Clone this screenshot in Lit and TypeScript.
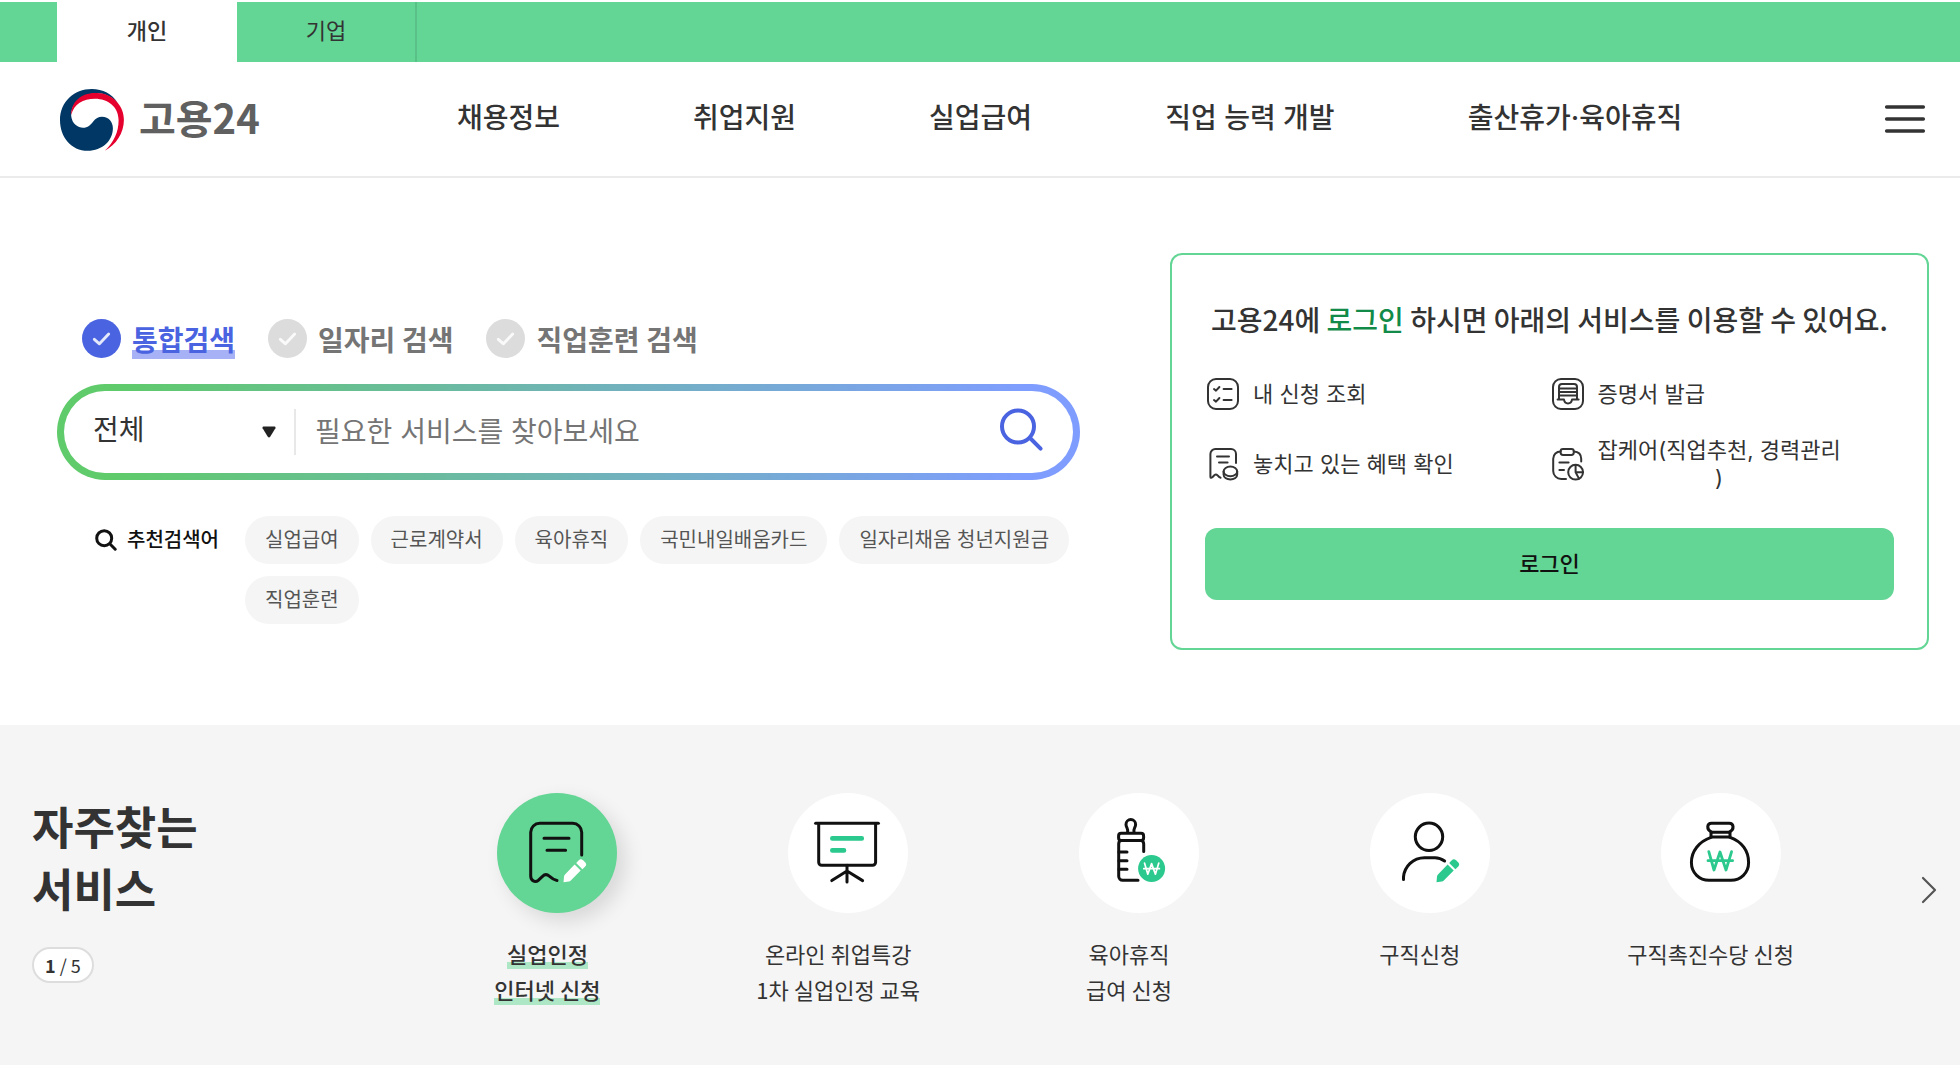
import { LitElement, html, css, svg } from "lit";
import { customElement, state } from "lit/decorators.js";
import { classMap } from "lit/directives/class-map.js";

const pencil = (fill: string) => svg`
  <g fill=${fill}>
    <path d="M66.5 89.2 L67 83.6 Q67.1 82.4 68 81.5 L77.6 71.6 L83.7 77.6 L73.8 87.4 Q73 88.3 71.8 88.5 Z" />
    <path d="M79.2 70 L81.6 67.4 Q83.8 65.2 86 67.2 L88.1 69.2 Q90.2 71.4 88.2 73.6 L85.4 76.2 Z" />
  </g>`;

const serviceIcons = {
  claim: svg`
    <g class="line">
      <path d="M84.7 62 V39.3 A9 9 0 0 0 75.7 30.3 H42.7 A9 9 0 0 0 33.7 39.3 V83 C33.7 88 38 89.8 41.5 87.2 L45.5 83.4 Q48.8 80 52.3 83.2 Q56.5 87 60 87.6" />
      <path d="M47 45.3 H72 M50 57.3 H68.6" />
    </g>
    ${pencil("#fff")}`,
  lecture: svg`
    <g class="line">
      <path d="M27.6 30.3 H90.4" />
      <path d="M30.7 31 V69.3 A3 3 0 0 0 33.7 72.3 H84.6 A3 3 0 0 0 87.6 69.3 V31" />
      <path d="M59 72.3 V89 M59 78 L43.8 87.6 M59 78 L74.6 87.6" />
    </g>
    <path d="M44.3 45.4 H73.8 M44.3 57.4 H56" fill="none" stroke="#2bc98d" stroke-width="4.6" stroke-linecap="round" />`,
  bottle: svg`
    <g class="line">
      <path d="M48.6 39 C49.4 35.6 47 34.4 47 31.4 A4.8 4.8 0 0 1 56.6 31.4 C56.6 34.4 54.2 35.6 55 39" />
      <rect x="39.6" y="40.3" width="25" height="7.2" rx="2.6" />
      <path d="M64.7 58.6 V51 Q64.6 48 62 47.6 M42.2 47.6 Q39.7 48 39.7 51 V83.3 A4 4 0 0 0 43.7 87.3 H59" />
      <path d="M40 59 H48 M40 67.7 H48 M40 76.3 H48" />
    </g>
    <circle cx="72.6" cy="75.5" r="13.5" fill="#2bc98d" />
    <path d="M65.5 70 L68.8 81.2 L72.6 70.6 L76.4 81.2 L79.8 70 M64.8 75.7 H80.4" fill="none" stroke="#fff" stroke-width="1.7" stroke-linecap="round" stroke-linejoin="round" />`,
  person: svg`
    <g class="line">
      <circle cx="59" cy="43.8" r="13.7" />
      <path d="M33.5 86.5 V84 C34.5 73.5 43 64.7 54.5 64.7 H65 C68.6 64.7 71.6 65.8 74.6 68" />
    </g>
    ${pencil("#2bc98d")}`,
  bag: svg`
    <g class="line">
      <path d="M50.5 39 C45 36.4 46 30.3 50.5 30.3 H68.2 C72.8 30.3 73.8 36.4 68.4 39" />
      <path d="M50 39.3 H69 M50 39.3 V44 H69 V39.3" />
      <path d="M50 44.4 C38 48.6 30.4 58 30.4 69.5 C30.4 80 38.5 87.3 48 87.3 H70 C79.6 87.3 87.6 80 87.6 69.5 C87.6 58 81 48.6 69 44.4" />
    </g>
    <path d="M47.8 58.6 L53 77 L59 59 L65 77 L70.6 58.6 M47 67.7 H71.6" fill="none" stroke="#2bc98d" stroke-width="2.8" stroke-linecap="round" stroke-linejoin="round" />`,
};

const benefitIcons = {
  checklist: svg`
    <rect x="1" y="1" width="30" height="30" rx="8" />
    <path d="M7 11 L9 12.6 L12.4 9 M16.6 11 H24.6 M7 22 L9 23.6 L12.4 20 M16.6 22 H24.6" />`,
  certificate: svg`
    <rect x="1" y="1" width="30" height="30" rx="8" />
    <path d="M7 21 V9 A3 3 0 0 1 10 6 H22 A3 3 0 0 1 25 9 V21 M7.5 10.4 H24.5 M7.5 14 H24.5 M7.5 17.4 H24.5" />
    <path d="M5.6 21.6 H12 Q12.6 25.4 16 25.4 Q19.4 25.4 20 21.6 H26.6" />`,
  receipt: svg`
    <path d="M29 15 V6 A5 5 0 0 0 24 1 H8.4 A5 5 0 0 0 3.4 6 V28.4 Q3.4 31 5.6 29 L7.6 27 Q9 25.8 10.6 27.4 Q12 29.4 13.6 29.8" />
    <path d="M10 8.6 H22 M12 14.4 H20.6" />
    <ellipse cx="23.4" cy="23.4" rx="6.8" ry="4.8" />
    <path d="M16.6 23.4 V26.6 C16.6 33 30.2 33 30.2 26.6 V23.4" />`,
  career: svg`
    <path d="M8.6 3.4 A7.4 7.4 0 0 0 1.2 10.8 V23 A8 8 0 0 0 9.2 31 H14 M21.8 3.4 Q29.2 3.8 29.2 10.8 V13.4" />
    <rect x="8.6" y="1" width="13.2" height="6" rx="2.4" />
    <path d="M7.4 14.4 H16.6 M7.4 22 H12" />
    <circle cx="23.6" cy="24.2" r="7.4" />
    <path d="M23.6 17 V24.2 H31 M23.6 24.2 L27 30.6" />`,
};

const services = [
  { icon: serviceIcons.claim, lines: ["실업인정", "인터넷 신청"] },
  { icon: serviceIcons.lecture, lines: ["온라인 취업특강", "1차 실업인정 교육"] },
  { icon: serviceIcons.bottle, lines: ["육아휴직", "급여 신청"] },
  { icon: serviceIcons.person, lines: ["구직신청"] },
  { icon: serviceIcons.bag, lines: ["구직촉진수당 신청"] },
];

const benefits = [
  { icon: benefitIcons.checklist, lines: ["내 신청 조회"] },
  { icon: benefitIcons.certificate, lines: ["증명서 발급"] },
  { icon: benefitIcons.receipt, lines: ["놓치고 있는 혜택 확인"] },
  { icon: benefitIcons.career, lines: ["잡케어(직업추천, 경력관리", ")"] },
];

const menu = ["채용정보", "취업지원", "실업급여", "직업 능력 개발", "출산휴가·육아휴직"];
const scopes = ["통합검색", "일자리 검색", "직업훈련 검색"];
const keywords = ["실업급여", "근로계약서", "육아휴직", "국민내일배움카드", "일자리채움 청년지원금", "직업훈련"];

@customElement("app-root")
export class AppRoot extends LitElement {
  @state() private scope = 0;
  @state() private activeService = 0;

  static styles = css`
    :host {
      display: block;
      min-height: 100vh;
      background: #fff;
      color: #333;
      font-family: "Noto Sans CJK KR", "Noto Sans", sans-serif;
      font-size: 22px;
    }
    .audience, .menu, .search, .benefits, .login {
      font-family: "Inter", "Noto Sans CJK KR", sans-serif;
    }
    * { box-sizing: border-box; }
    a { color: inherit; text-decoration: none; }
    button, input, select {
      font: inherit;
      color: inherit;
      border: 0;
      margin: 0;
      padding: 0;
      background: none;
    }
    button { cursor: pointer; }
    svg { display: block; flex: none; }
    ul { list-style: none; margin: 0; padding: 0; }
    h1, h2, p { margin: 0; }

    .audience {
      display: flex;
      height: 62px;
      padding-left: 57px;
      border-top: 2px solid #fff;
      background: #63d594;
    }
    .audience button { width: 180px; padding-bottom: 2px; line-height: 32px; }
    .audience .current { background: #fff; font-weight: 500; }
    .audience .other { border-right: 2px solid #59c187; }

    .header {
      display: flex;
      align-items: center;
      height: 116px;
      padding: 0 34px 0 60px;
      border-bottom: 2px solid #ebebeb;
    }
    .brand {
      display: flex;
      align-items: center;
      gap: 14px;
      width: 397px;
      padding-top: 2px;
      font-size: 40px;
      line-height: 54px;
      font-weight: 700;
      color: #606060;
    }
    .brand span { padding-bottom: 6px; }
    .menu {
      display: flex;
      gap: 133px;
      padding-bottom: 2px;
      font-size: 28px;
      line-height: 40px;
      font-weight: 500;
      white-space: nowrap;
    }
    .hamburger { margin-left: auto; }

    .hero {
      display: grid;
      grid-template-columns: 1023fr 759fr;
      column-gap: 90px;
      padding: 75px 31px 75px 57px;
    }
    .search { padding-top: 60px; }
    .scopes {
      display: flex;
      gap: 33px;
      margin: 0 0 21px;
      padding: 0 0 0 25px;
      border: 0;
      font-size: 28px;
      line-height: 44px;
      font-weight: 700;
      color: #757575;
    }
    .scope { display: flex; align-items: center; gap: 11px; cursor: pointer; }
    .scope input { appearance: none; width: 0; height: 0; position: absolute; }
    .scope .disc { fill: #dcdcdc; }
    .scope.on { color: #4a63e0; }
    .scope.on .disc { fill: #4a63e0; }
    .scope .name { padding-top: 6px; }
    .scope.on .name { background: linear-gradient(#a6b1f6, #a6b1f6) 0 37px / 100% 9px no-repeat; }

    .bar {
      display: flex;
      align-items: center;
      height: 96px;
      padding: 0 29px;
      border: 7px solid transparent;
      border-radius: 48px;
      background: linear-gradient(#fff, #fff) padding-box,
        linear-gradient(90deg, #5fcb6a 5%, #7f9dff 95%) border-box;
      font-size: 28px;
      line-height: 40px;
    }
    .kind {
      position: relative;
      display: flex;
      align-items: center;
      width: 203px;
      height: 46px;
      border-right: 2px solid #e8e8e8;
    }
    .kind select { appearance: none; width: 100%; padding-bottom: 4px; outline: 0; }
    .kind svg { position: absolute; right: 18px; pointer-events: none; }
    .bar input { flex: 1; min-width: 0; padding-left: 19px; outline: 0; }
    .bar input::placeholder { color: #757575; opacity: 1; }
    .bar button { padding-bottom: 2px; }

    .suggest {
      display: flex;
      gap: 26px;
      padding: 36px 0 0 38px;
      font-size: 20px;
      line-height: 48px;
    }
    .suggest h2 {
      display: flex;
      align-items: center;
      gap: 10px;
      height: 48px;
      flex: none;
      font-size: 20px;
      font-weight: 500;
      color: #111;
    }
    .chips { display: flex; flex-wrap: wrap; gap: 12px; }
    .chips a {
      display: block;
      padding: 0 20px;
      border-radius: 24px;
      background: #f5f5f5;
      color: #555;
      line-height: 48px;
    }

    .card {
      display: flex;
      flex-direction: column;
      padding: 45px 33px 48px;
      border: 2px solid #63d594;
      border-radius: 12px;
    }
    .card h2 {
      font-size: 28px;
      line-height: 38px;
      font-weight: 500;
      text-align: center;
      white-space: nowrap;
    }
    .card strong { font-weight: 500; color: #128a48; }
    .benefits {
      display: grid;
      grid-template-columns: 1fr 1fr;
      grid-template-rows: 64px 76px;
      align-items: center;
      padding: 24px 0 26px;
      line-height: 28px;
    }
    .benefits a { display: flex; align-items: center; gap: 14px; padding-left: 2px; text-align: center; }
    .benefits svg {
      fill: none;
      stroke: #333;
      stroke-width: 2;
      stroke-linecap: round;
      stroke-linejoin: round;
      overflow: visible;
    }
    .login {
      display: block;
      border-radius: 12px;
      background: #63d594;
      color: #111;
      font-weight: 500;
      line-height: 72px;
      text-align: center;
    }

    .services {
      display: flex;
      min-height: 340px;
      padding: 68px 14px 0 32px;
      background: #f5f5f5;
    }
    .intro { width: 370px; padding-top: 2px; }
    .intro h1 { font-size: 45px; line-height: 62px; font-weight: 700; }
    .pager {
      display: inline-block;
      margin-top: 28px;
      padding: 0 11px;
      border: 2px solid #ddd;
      border-radius: 18px;
      background: #fff;
      font-size: 18px;
      line-height: 32px;
      vertical-align: top;
    }
    .list { flex: 1; display: grid; grid-template-columns: repeat(5, 1fr); }
    .service {
      display: flex;
      flex-direction: column;
      align-items: center;
      gap: 22px;
      line-height: 36px;
      text-align: center;
      white-space: nowrap;
    }
    .round { padding-left: 20px; }
    .round svg { border-radius: 50%; background: #fff; }
    .line {
      fill: none;
      stroke: #111;
      stroke-width: 3;
      stroke-linecap: round;
      stroke-linejoin: round;
    }
    .service.on { font-weight: 500; }
    .service.on .round svg { background: #63d594; box-shadow: 8px 8px 20px rgba(0, 0, 0, 0.12); }
    .service.on .text {
      display: inline-block;
      background: linear-gradient(#aee7c5, #aee7c5) 0 100% / 100% 7px no-repeat;
      line-height: 32px;
    }
    .next { width: 90px; height: 194px; display: flex; align-items: center; justify-content: flex-end; padding-right: 8px; }
  `;

  render() {
    return html`
      <nav class="audience" aria-label="이용자 구분">
        <button class="current" aria-current="page">개인</button>
        <button class="other">기업</button>
      </nav>
      <header class="header">
        <a class="brand" href="#">
          <svg width="65" height="62" viewBox="0 0 65 62" aria-hidden="true">
            <path fill="#003764" d="M0 31 C0 13 14 0 31.7 0 C43 0 52 5 57.5 13.5 C50 6 42 3.5 35 4.3 C20 6 11 15 11.2 27 C12 35 18 38.7 23 38.7 C28 38.7 30.5 36 33 32.7 C35.5 29.5 38.5 27.7 42 27.7 C49 27.7 52.9 33 52.9 39.3 C52.9 52 42 61.8 27.8 61.8 C11 61.8 0 48 0 31Z" />
            <path fill="#e6002d" d="M11.2 26 C11 13 21 4 35 4 C43 3.4 51 6 57 13 C61.5 18 63.9 24 63.9 31 C63.9 44 56 56 44.8 61.8 C54 53 58.6 43 58.6 31 C58.6 18 48 9.7 35 9.7 C23 9.7 14 15 11.2 26Z" />
          </svg>
          <span>고용24</span>
        </a>
        <nav class="menu" aria-label="주 메뉴">
          ${menu.map((m) => html`<a href="#">${m}</a>`)}
        </nav>
        <button class="hamburger" aria-label="전체 메뉴">
          <svg width="42" height="30" viewBox="0 0 42 30">
            <path d="M2.6 3 H39.4 M2.6 15 H39.4 M2.6 27 H39.4" stroke="#333" stroke-width="3.4" stroke-linecap="round" />
          </svg>
        </button>
      </header>
      <main>
        <section class="hero">
          <form class="search" @submit=${(e: Event) => e.preventDefault()}>
            <fieldset class="scopes" aria-label="검색 구분">
              ${scopes.map(
                (s, i) => html`
                  <label class=${classMap({ scope: true, on: i === this.scope })}>
                    <input type="radio" name="scope" .checked=${i === this.scope} @change=${() => (this.scope = i)} />
                    <svg width="39" height="39" viewBox="0 0 38 38" aria-hidden="true">
                      <circle class="disc" cx="19" cy="19" r="19" />
                      <path d="M12 19.8 L17 24.2 L26 14.6" fill="none" stroke="#fff" stroke-opacity=".85" stroke-width="2.8" stroke-linecap="round" stroke-linejoin="round" />
                    </svg>
                    <span class="name">${s}</span>
                  </label>`
              )}
            </fieldset>
            <div class="bar">
              <div class="kind">
                <select aria-label="검색 범위"><option>전체</option></select>
                <svg width="14" height="12" viewBox="0 0 14 12" aria-hidden="true">
                  <path d="M1.4 0.6 H12.6 Q14 0.8 13.4 2.2 L8.2 10.8 Q7 12 5.8 10.8 L0.6 2.2 Q0 0.8 1.4 0.6Z" fill="#222" />
                </svg>
              </div>
              <input type="text" aria-label="검색어" placeholder="필요한 서비스를 찾아보세요" />
              <button aria-label="검색">
                <svg width="46" height="46" viewBox="0 0 46 46">
                  <g fill="none" stroke="#4a63e0" stroke-width="4" stroke-linecap="round">
                    <circle cx="20" cy="18.5" r="16" />
                    <path d="M32 30 L42.6 40.6" />
                  </g>
                </svg>
              </button>
            </div>
            <div class="suggest">
              <h2>
                <svg width="22" height="22" viewBox="0 0 22 22" aria-hidden="true">
                  <g fill="none" stroke="#111" stroke-width="3" stroke-linecap="round">
                    <circle cx="9.2" cy="9.2" r="7.5" />
                    <path d="M15 15 L20.2 20.2" />
                  </g>
                </svg>
                추천검색어
              </h2>
              <div class="chips">${keywords.map((k) => html`<a href="#">${k}</a>`)}</div>
            </div>
          </form>
          <aside class="card">
            <h2>고용24에 <strong>로그인</strong> 하시면 아래의 서비스를 이용할 수 있어요.</h2>
            <div class="benefits">
              ${benefits.map(
                (b) => html`<a href="#">
                  <svg width="32" height="32" viewBox="0 0 32 32" aria-hidden="true">${b.icon}</svg>
                  <span>${b.lines.map((l, i) => (i ? html`<br />${l}` : l))}</span>
                </a>`
              )}
            </div>
            <a class="login" href="#">로그인</a>
          </aside>
        </section>
        <section class="services">
          <div class="intro">
            <h1>자주찾는<br />서비스</h1>
            <p class="pager"><b>1</b> / 5</p>
          </div>
          <div class="list">
            ${services.map(
              (s, i) => html`
                <a
                  href="#"
                  class=${classMap({ service: true, on: i === this.activeService })}
                  @mouseenter=${() => (this.activeService = i)}
                >
                  <span class="round">
                    <svg width="120" height="120" viewBox="0 0 120 120" aria-hidden="true">${s.icon}</svg>
                  </span>
                  <span>${s.lines.map((l, j) => html`${j ? html`<br />` : ""}<span class="text">${l}</span>`)}</span>
                </a>`
            )}
          </div>
          <button class="next" aria-label="다음 서비스">
            <svg width="18" height="28" viewBox="0 0 18 28">
              <path d="M3 2 L15 14 L3 26" fill="none" stroke="#555" stroke-width="2.2" stroke-linecap="round" stroke-linejoin="round" />
            </svg>
          </button>
        </section>
      </main>
    `;
  }
}
